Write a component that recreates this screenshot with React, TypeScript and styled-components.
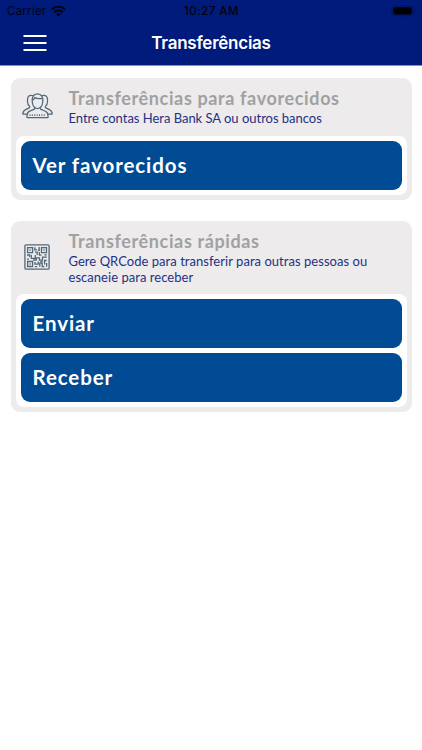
import React from "react";
import styled, { createGlobalStyle } from "styled-components";

const GlobalStyle = createGlobalStyle`
  * { box-sizing: border-box; }
  body { margin: 0; background: #fff; }
`;

const Screen = styled.div`
  width: 422px;
  height: 750px;
  overflow: hidden;
  background: #fff;
  font-family: "Lato", sans-serif;
`;

const Header = styled.header`
  height: 66px;
  background: #001b7b;
  border-bottom: 1px solid #8890c2;
`;

const StatusBar = styled.div`
  display: grid;
  grid-template-columns: 1fr auto 1fr;
  align-items: center;
  height: 22px;
  padding: 0 6px 0 7px;
  color: #02030f;
  font-family: "Inter", sans-serif;
  font-size: 11.5px;
`;

const Carrier = styled.div`
  display: flex;
  align-items: center;
  gap: 5px;
  letter-spacing: 0.25px;
`;

const Clock = styled.div`
  font-weight: 500;
  letter-spacing: 0.5px;
`;

const BatteryIcon = styled.svg`
  justify-self: end;
`;

const NavBar = styled.div`
  display: grid;
  grid-template-columns: 70px 1fr 70px;
  align-items: center;
  height: 42px;
`;

const MenuButton = styled.button`
  display: flex;
  justify-content: center;
  padding: 0;
  border: 0;
  background: none;
`;

const NavTitle = styled.h1`
  margin: 0;
  color: #fff;
  font: 600 17px/22px "Inter", sans-serif;
  letter-spacing: -0.25px;
  text-align: center;
`;

const Content = styled.main`
  display: flex;
  flex-direction: column;
  gap: 20.5px;
  padding: 12px 10.5px 0;
`;

const Card = styled.section`
  padding: 0 5px 5px;
  border-radius: 9px;
  background: #edebec;
`;

const CardHeader = styled.div<{ $height: number }>`
  display: grid;
  grid-template-columns: 53px 1fr;
  height: ${(p) => p.$height}px;
`;

const IconCell = styled.div<{ $top: number; $left: number }>`
  padding: ${(p) => p.$top}px 0 0 ${(p) => p.$left}px;
  line-height: 0;
`;

const CardText = styled.div`
  padding-top: 9px;
`;

const CardTitle = styled.h2`
  margin: 0;
  color: #a1a1a1;
  font-size: 18px;
  font-weight: 700;
  line-height: 23px;
  letter-spacing: 0.63px;
  white-space: nowrap;
`;

const Description = styled.p<{ $spacing: number }>`
  margin: 0;
  color: #1d3284;
  font-size: 13px;
  line-height: 16px;
  letter-spacing: ${(p) => p.$spacing}px;
  white-space: nowrap;
`;

const Actions = styled.div`
  display: flex;
  flex-direction: column;
  gap: 5px;
  padding: 5px;
  border-radius: 8px;
  background: #fff;
`;

const ActionButton = styled.button`
  height: 49px;
  padding: 0 12px 1px;
  border: 0;
  border-radius: 9px;
  background: #004b93;
  color: #fff;
  font: 700 20.5px/24px "Lato", sans-serif;
  letter-spacing: 0.9px;
  text-align: left;
`;

const WifiIcon = () => (
  <svg width="15" height="12" viewBox="0 0 15 12" fill="none" stroke="#02030f" strokeWidth="2">
    <path d="M.8 4.6a9.5 9.5 0 0 1 13.4 0M3.2 7.2a6.1 6.1 0 0 1 8.6 0" />
    <path d="M7.5 11.4 5.2 9.1a3.3 3.3 0 0 1 4.6 0Z" fill="#02030f" stroke="none" />
  </svg>
);

const Battery = () => (
  <BatteryIcon width="25" height="12" viewBox="0 0 25 12">
    <rect x=".8" y=".8" width="21.4" height="10" rx="2.8" fill="none" stroke="#00145a" />
    <rect x="2.2" y="2.2" width="18.6" height="7.2" rx="1.6" fill="#000" />
    <path d="M23.3 4v3.6q1-.5 1-1.8t-1-1.8" fill="#00145a" />
  </BatteryIcon>
);

const MenuIcon = () => (
  <svg width="24" height="18" viewBox="0 0 24 18" fill="#fff">
    <path d="M.5 1h23v2H.5zM.5 8h23v2H.5zM.5 15h23v2H.5z" />
  </svg>
);

const PeopleIcon = () => (
  <svg width="31" height="26" viewBox="0 0 31 26" fill="none" stroke="#536878" strokeWidth="1.25" strokeLinecap="round" strokeLinejoin="round">
    <path d="M10.3 9.3C9.7 4 11.4.9 15.5.9s5.8 3.1 5.2 8.4c-.4 3.5-2.4 6.2-5.2 6.2s-4.8-2.7-5.2-6.2Z" />
    <path d="M10.8 6.8c1.2-.2 1.7-1.4 2.1-2.4 1.5 1.2 4.4 1.5 7.3 1M12.6 14.2v1.9l-5 2.1q-2.5 1.1-2.6 4.2v2.2h21v-2.2q-.1-3.1-2.6-4.2l-5-2.1v-1.9" />
    <path d="M10.7 2.6C7.5 1.5 5.5 3.2 5.5 6.4v2.2c0 2.3.8 3.9 2.1 4.7v1.3l-4 2Q.9 18 .8 21h3.8M20.3 2.6c3.2-1.1 5.2.6 5.2 3.8v2.2c0 2.3-.8 3.9-2.1 4.7v1.3l4 2Q30.1 18 30.2 21h-3.8" />
    <path d="M7.4 22.2h16.2" strokeDasharray="1 1.4" strokeLinecap="butt" strokeWidth="1.7" />
  </svg>
);

const QrIcon = () => (
  <svg width="26" height="26" viewBox="0 0 26 26" fill="none" stroke="#536878" strokeWidth="1.3">
    <rect x=".9" y=".9" width="24.2" height="24.2" rx="1.2" />
    <path d="M3.6 3.6h5v5h-5zM17.5 3.6h5v5h-5zM3.6 17.5h5v5h-5z" />
    <path d="M5.5 6.1h1.3M19.4 6.1h1.3M5.5 20h1.3" strokeWidth="1.5" />
    <path d="M10.8 3.2v2.6h2.1M15.2 3v3.3h-1.3M11 8.2h2.2V11M15.4 8v3.2h2.1M3 11h2.5v2M7.3 10.8v3.6h4v-3.3M3 15.2h2M9 16h3.2v-2.2h3.2v2.4h3.1v-3h4.3M20.3 10.8h2.5M11 18.1v2h3.2v-2.5M11 22.6h2.2M15.8 22.7v-3.5h2.4v3.5h2.2M20.6 20.5v-4h2.2M22.6 19v3.7M16.2 17.6h2.6" />
  </svg>
);

export default function App() {
  return (
    <>
      <GlobalStyle />
      <Screen>
        <Header>
          <StatusBar>
            <Carrier>Carrier<WifiIcon /></Carrier>
            <Clock>10:27 AM</Clock>
            <Battery />
          </StatusBar>
          <NavBar>
            <MenuButton aria-label="Menu"><MenuIcon /></MenuButton>
            <NavTitle>Transferências</NavTitle>
          </NavBar>
        </Header>
        <Content>
          <Card>
            <CardHeader $height={58}>
              <IconCell $top={15} $left={6}><PeopleIcon /></IconCell>
              <CardText>
                <CardTitle>Transferências para favorecidos</CardTitle>
                <Description $spacing={-0.02}>Entre contas Hera Bank SA ou outros bancos</Description>
              </CardText>
            </CardHeader>
            <Actions>
              <ActionButton>Ver favorecidos</ActionButton>
            </Actions>
          </Card>
          <Card>
            <CardHeader $height={73.5}>
              <IconCell $top={23} $left={8.5}><QrIcon /></IconCell>
              <CardText>
                <CardTitle>Transferências rápidas</CardTitle>
                <Description $spacing={0.04}>
                  Gere QRCode para transferir para outras pessoas ou<br />escaneie para receber
                </Description>
              </CardText>
            </CardHeader>
            <Actions>
              <ActionButton>Enviar</ActionButton>
              <ActionButton>Receber</ActionButton>
            </Actions>
          </Card>
        </Content>
      </Screen>
    </>
  );
}
